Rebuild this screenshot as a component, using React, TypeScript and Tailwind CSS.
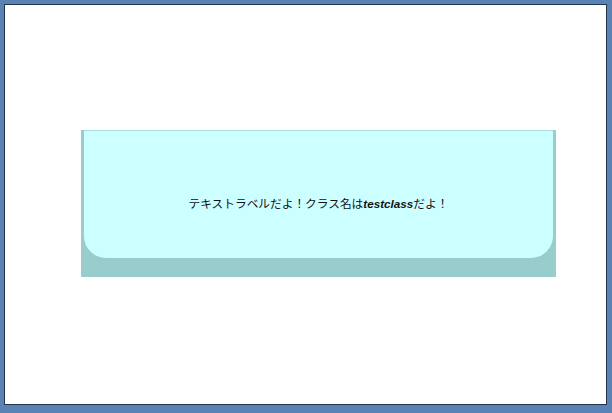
export default function App() {
  return (
    <div className="w-[612px] h-[413px] bg-[#5a82b2] pt-[4px] pl-[4px]">
      <div className="w-[603px] h-[401px] bg-white border border-[#22344e] pt-[125px] pl-[76px]">
        <div className="w-[475px] h-[147px] bg-[#99cccc] px-[3px]">
          <div className="h-[128px] bg-[#ccffff] border-t border-[#a8dede] rounded-b-[22px] flex items-center justify-center pt-[18px]">
            <p
              className="text-[11.7px] text-[#111] leading-none"
              style={{ fontFamily: '"Noto Sans CJK JP", "Liberation Sans", sans-serif' }}
            >
              テキストラベルだよ！クラス名は
              <span className="font-bold italic" style={{ fontFamily: '"Liberation Sans", sans-serif' }}>
                testclass
              </span>
              だよ！
            </p>
          </div>
        </div>
      </div>
    </div>
  )
}
